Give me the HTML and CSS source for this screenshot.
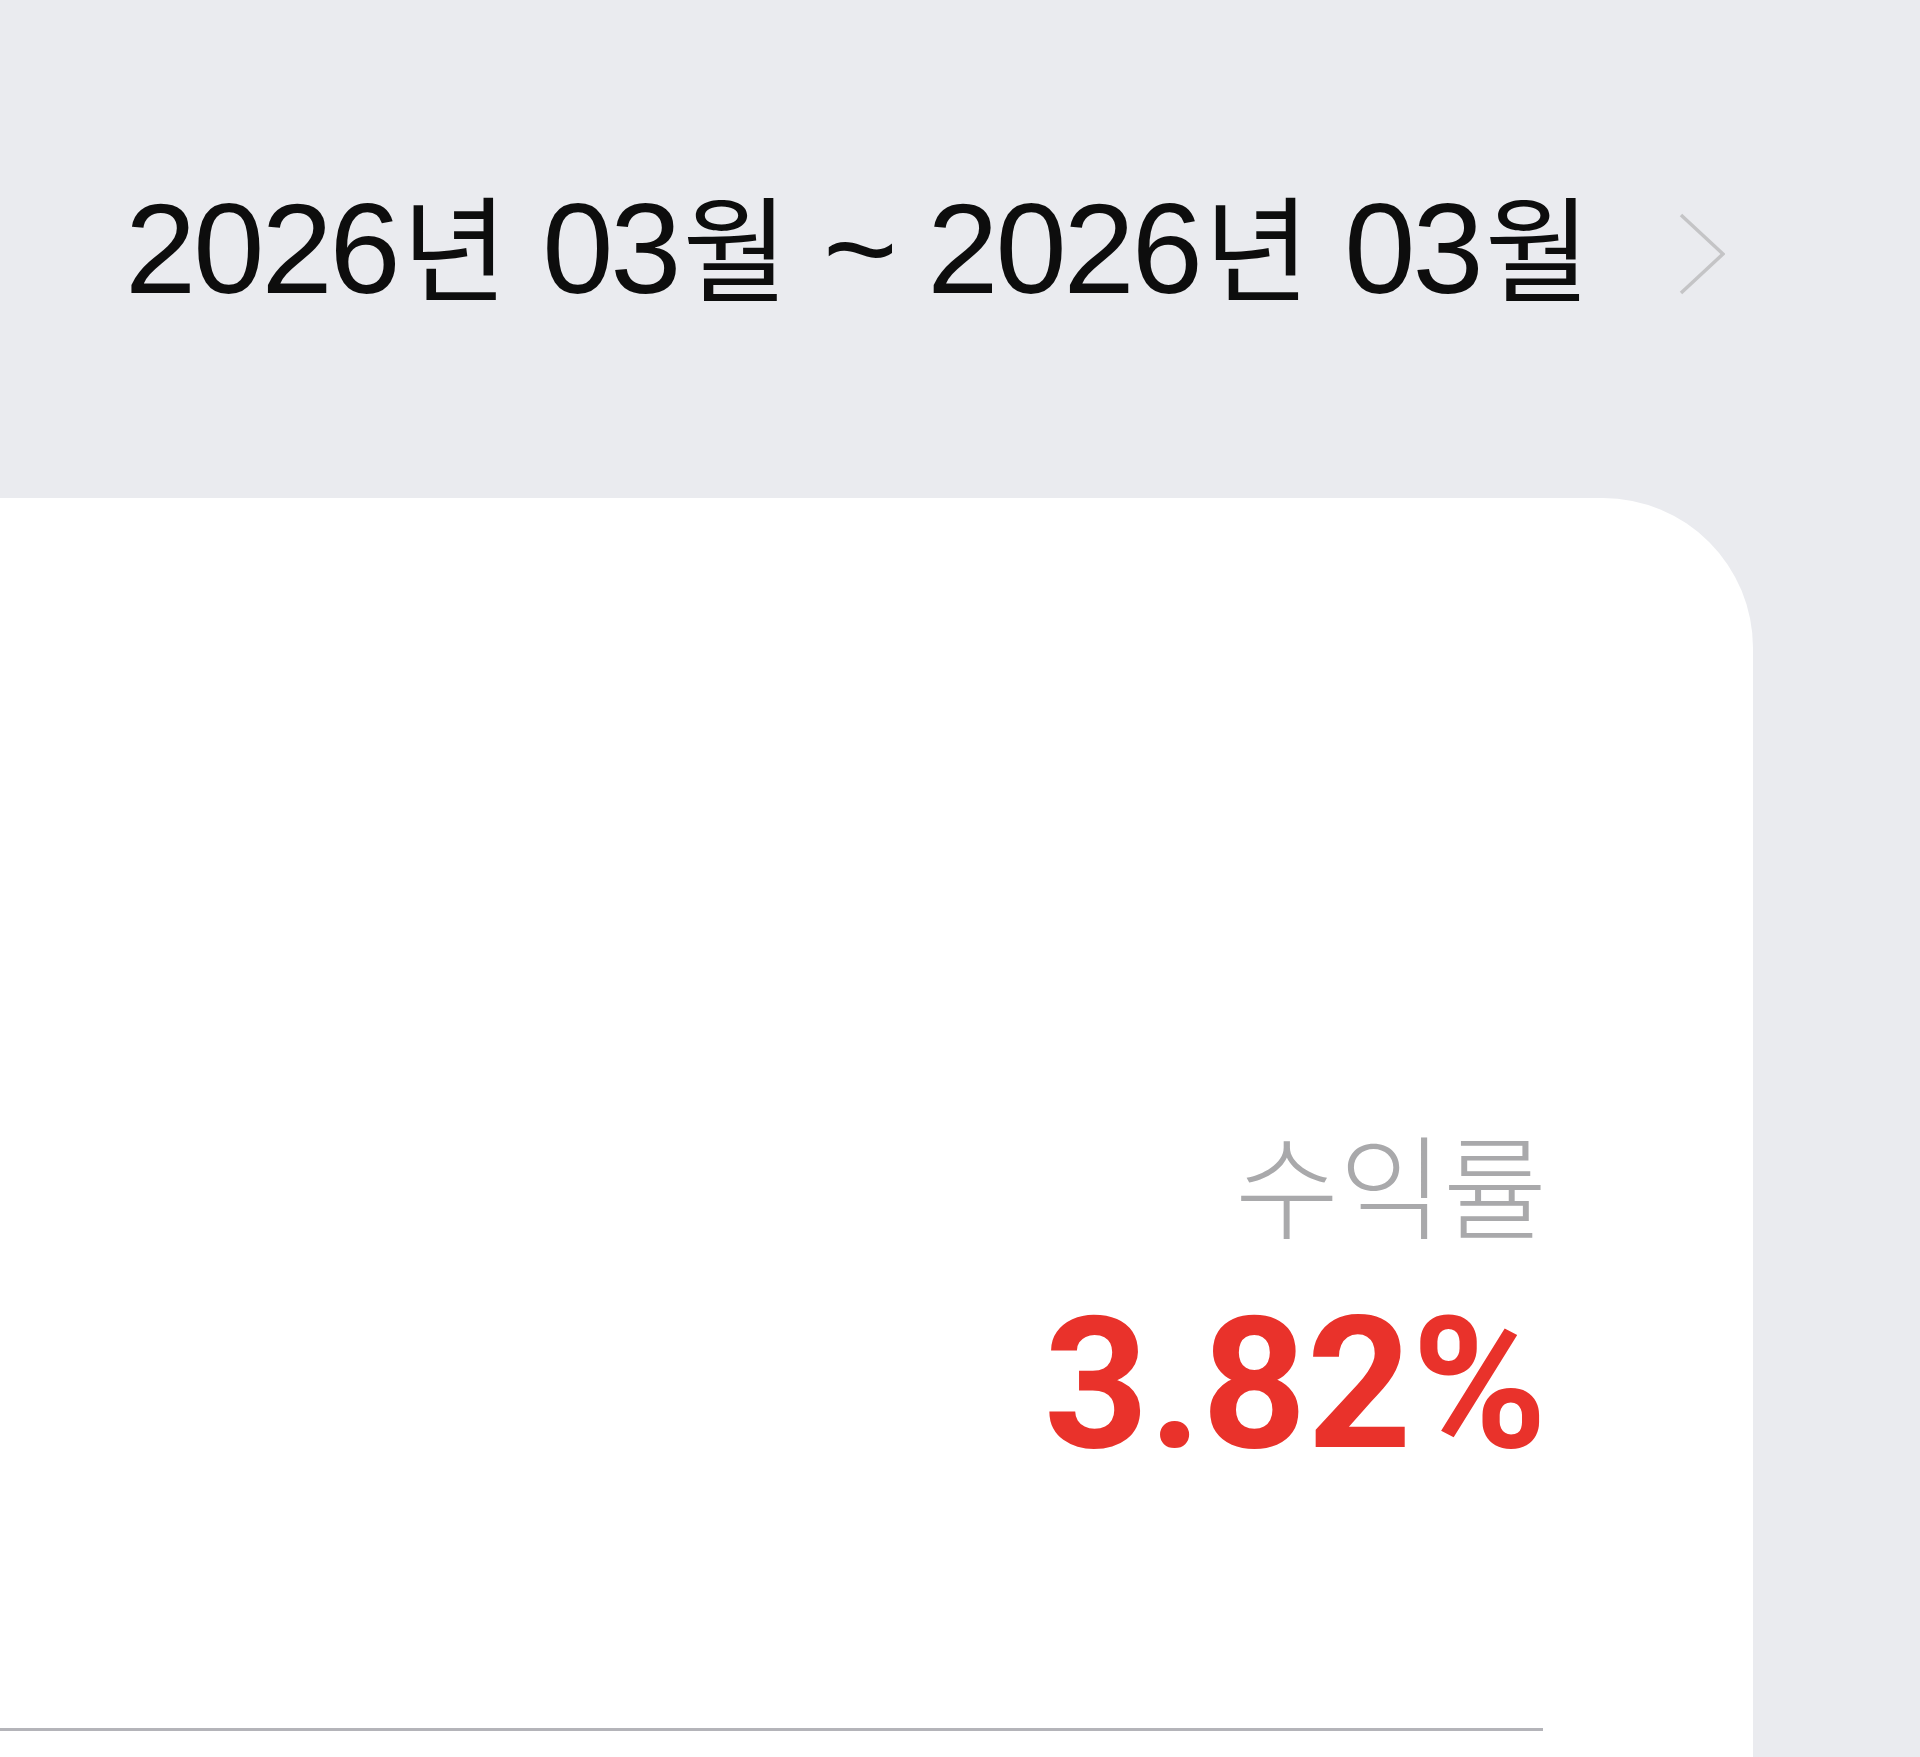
FILE: index.html
```html
<!DOCTYPE html>
<html lang="ko">
<head>
  <meta charset="UTF-8" />
  <meta name="viewport" content="width=device-width, initial-scale=1.0"/>
  <title>수익률</title>
  <link rel="stylesheet" href="styles.css">
</head>
<body>
  <header class="period">
    <span class="period-text">2026<span class="unit">년</span> 03<span class="unit">월</span> ~ 2026<span class="unit">년</span> 03<span class="unit">월</span></span>
    <svg class="chevron" width="46" height="82" viewBox="0 0 46 82">
      <polyline points="2,2 44,41 2,80" fill="none" stroke="#c4c4c6" stroke-width="3.5" />
    </svg>
  </header>

  <main class="card">
    <div class="summary">
      <p class="label">수익률</p>
      <p class="rate">3.82%</p>
    </div>
    <hr class="divider" />
  </main>
</body>
</html>
```

FILE: styles.css
```css
body {
  margin: 0;
  padding: 0;
  background: #eaebef;
  font-family: Roboto, "Noto Sans CJK KR", sans-serif;
  color: #111;
  overflow: hidden;
}

.period {
  height: 498px;
  display: flex;
  align-items: center;
  padding-left: 125px;
}

.period-text {
  font-family: "Liberation Sans", "Noto Sans CJK KR", sans-serif;
  font-size: 128px;
  line-height: 1;
  letter-spacing: -3px;
  color: #0d0d0d;
  white-space: nowrap;
}

.unit {
  font-family: "Noto Sans CJK KR", sans-serif;
  font-size: 115px;
  letter-spacing: 2px;
  margin-left: 4px;
}

.chevron {
  flex-shrink: 0;
  margin-left: auto;
  margin-right: 195px;
  margin-top: 10px;
}

.card {
  background: #fff;
  margin-right: 167px;
  border-top-right-radius: 150px;
  height: 1259px;
  padding-top: 616px;
  box-sizing: border-box;
}

.summary {
  text-align: right;
  padding-right: 206px;
}

.label {
  margin: 0;
  font-family: "Noto Sans CJK KR", sans-serif;
  font-weight: 300;
  font-size: 113px;
  line-height: 1.2;
  color: #a9a9ab;
}

.rate {
  margin: 43px 0 0;
  font-family: Roboto, sans-serif;
  font-weight: 700;
  font-size: 183px;
  line-height: 1;
  color: #e9322b;
}

.divider {
  margin: 252px 0 0;
  width: 1543px;
  border: none;
  border-top: 3px solid #b4b4b9;
}
```
